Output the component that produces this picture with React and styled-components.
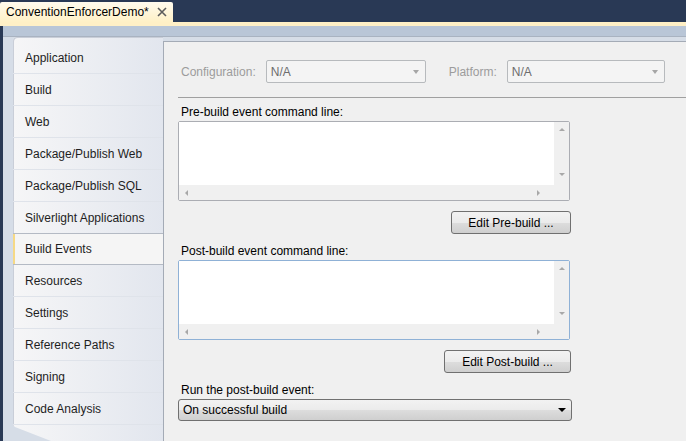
import React from 'react'
import styled, { createGlobalStyle } from 'styled-components'

const GlobalStyle = createGlobalStyle`
  html, body { margin: 0; padding: 0; background: #293955; }
  * { box-sizing: border-box; }
`

const font = `"Liberation Sans", "DejaVu Sans", Arial, sans-serif`

const Frame = styled.div`
  width: 686px;
  height: 441px;
  overflow: hidden;
  display: flex;
  flex-direction: column;
  background: #293955;
  font-family: ${font};
  font-size: 12px;
  color: #1e1e1e;
`

const TabStrip = styled.div`
  height: 22px;
  display: flex;
  align-items: flex-end;
`

const DocTab = styled.div`
  width: 173px;
  height: 20px;
  display: flex;
  align-items: center;
  justify-content: space-between;
  padding: 0 6px 0 6px;
  border-radius: 2px 2px 0 0;
  background: linear-gradient(#fffbee, #fff1c6);
  color: #000;
`

const CloseIcon = styled.svg`
  width: 10px;
  height: 10px;
  display: block;
`

const YellowBar = styled.div`
  height: 4px;
  background: #fff0c6;
`

const Body = styled.div`
  flex: 1;
  display: flex;
  border-left: 3px solid #293955;
  background: linear-gradient(#b9c6d7 0, #b9c6d7 10px, #a9b3c1 10px, #a9b3c1 11px, #d6dde7 11px);
  min-height: 0;
`

const Sidebar = styled.div`
  width: 150px;
  margin: 11px 0 0 10px;
  padding-top: 5px;
  border-radius: 4px 0 0 0;
  background: linear-gradient(to right, #f6f6f7, #e2e6ee);
  box-shadow: inset 1px 1px 0 #c9ced8;
  clip-path: polygon(0 0, 100% 0, 100% 100%, 38px 100%, 2px calc(100% - 14px), 0 calc(100% - 16px));
  display: flex;
  flex-direction: column;
`

const NavItem = styled.div`
  height: 32px;
  display: flex;
  align-items: center;
  padding-left: 12px;
  border-bottom: 1px solid ${p => (p.$active ? '#b4bac4' : '#dfe3ea')};
  ${p => p.$active && `
    background: #f5f5f5;
    margin-right: -2px;
    position: relative;
    z-index: 1;
    border-top: 1px solid #b4bac4;
    margin-top: -1px;
    box-shadow: inset 2px 0 0 #f6d985;
  `}
`

const Content = styled.div`
  flex: 1;
  margin-top: 15px;
  background: #f0f0f0;
  border-left: 1px solid #a4abb6;
  border-top: 1px solid #a4abb6;
  padding-top: 18px;
`

const ConfigRow = styled.div`
  display: flex;
  align-items: center;
  padding-left: 17px;
  height: 23px;
`

const DimLabel = styled.span`
  color: #9c9c9c;
  margin-right: ${p => p.$gap}px;
`

const DisabledSelect = styled.div`
  width: ${p => p.$w}px;
  height: 23px;
  border: 1px solid #b7babd;
  border-radius: 2px;
  background: #f4f4f4;
  display: flex;
  align-items: center;
  justify-content: space-between;
  padding: 0 6px 0 4px;
  color: #6d6d6d;
  margin-right: ${p => p.$mr || 0}px;
`

const DimArrow = styled.span`
  width: 0;
  height: 0;
  border-left: 3.5px solid transparent;
  border-right: 3.5px solid transparent;
  border-top: 4px solid #a6a6a6;
`

const Divider = styled.div`
  height: 1px;
  background: #a0a0a0;
  margin: 14px 0 0 14px;
`

const Section = styled.div`
  width: 393px;
  margin-left: 14px;
  display: flex;
  flex-direction: column;
`

const FieldLabel = styled.div`
  padding-left: 3px;
  height: 17px;
  line-height: 16px;
  margin-top: ${p => p.$mt}px;
  color: #000;
`

const ScrollBox = styled.div`
  width: 392px;
  height: 80px;
  border: 1px solid ${p => (p.$focus ? '#8fb1d6' : '#abadb3')};
  border-radius: 2px;
  display: grid;
  grid-template-columns: 1fr 15px;
  grid-template-rows: 1fr 15px;
  background: #fff;
`

const TextArea = styled.div`
  background: #fff;
`

const VBar = styled.div`
  background: #f0f0f0;
  display: flex;
  flex-direction: column;
  justify-content: space-between;
  align-items: center;
  padding: 6px 0 9px;
`

const HBar = styled.div`
  background: #f0f0f0;
  display: flex;
  justify-content: space-between;
  align-items: center;
  padding: 0 14px 0 6px;
`

const Corner = styled.div`
  background: #f0f0f0;
`

const Tri = styled.span`
  width: 0;
  height: 0;
  ${p => p.$dir === 'up' && `border-left: 3.5px solid transparent; border-right: 3.5px solid transparent; border-bottom: 3px solid #a8a8a8;`}
  ${p => p.$dir === 'down' && `border-left: 3.5px solid transparent; border-right: 3.5px solid transparent; border-top: 3px solid #a8a8a8;`}
  ${p => p.$dir === 'left' && `border-top: 3.5px solid transparent; border-bottom: 3.5px solid transparent; border-right: 3px solid #a8a8a8;`}
  ${p => p.$dir === 'right' && `border-top: 3.5px solid transparent; border-bottom: 3.5px solid transparent; border-left: 3px solid #a8a8a8;`}
`

const ButtonRow = styled.div`
  display: flex;
  justify-content: flex-end;
  margin-top: ${p => p.$mt}px;
`

const Button = styled.div`
  width: ${p => p.$w}px;
  height: 23px;
  border: 1px solid #707070;
  border-radius: 3px;
  background: linear-gradient(#f2f2f2 0%, #ebebeb 50%, #dddddd 51%, #cfcfcf 100%);
  display: flex;
  align-items: center;
  justify-content: center;
  color: #000;
`

const DropDown = styled.div`
  width: 394px;
  height: 22px;
  border: 1px solid #707070;
  border-radius: 3px;
  background: linear-gradient(#f2f2f2 0%, #ebebeb 50%, #dddddd 51%, #cfcfcf 100%);
  display: flex;
  align-items: center;
  justify-content: space-between;
  padding: 0 4px 0 4px;
  color: #000;
`

const BlackArrow = styled.span`
  width: 0;
  height: 0;
  border-left: 4px solid transparent;
  border-right: 4px solid transparent;
  border-top: 4px solid #000;
  margin-right: 1px;
`

const navItems = [
  'Application',
  'Build',
  'Web',
  'Package/Publish Web',
  'Package/Publish SQL',
  'Silverlight Applications',
  'Build Events',
  'Resources',
  'Settings',
  'Reference Paths',
  'Signing',
  'Code Analysis',
]

const EventBox = ({ focus }) => (
  <ScrollBox $focus={focus}>
    <TextArea />
    <VBar>
      <Tri $dir="up" />
      <Tri $dir="down" />
    </VBar>
    <HBar>
      <Tri $dir="left" />
      <Tri $dir="right" />
    </HBar>
    <Corner />
  </ScrollBox>
)

const App = () => {
  return (
    <>
      <GlobalStyle />
      <Frame>
        <TabStrip>
          <DocTab>
            <span>ConventionEnforcerDemo*</span>
            <CloseIcon viewBox="0 0 10 10">
              <path d="M1 1 L9 9 M9 1 L1 9" stroke="#5c5c5c" strokeWidth="1.6" fill="none" />
            </CloseIcon>
          </DocTab>
        </TabStrip>
        <YellowBar />
        <Body>
          <Sidebar>
            {navItems.map(item => (
              <NavItem key={item} $active={item === 'Build Events'}>{item}</NavItem>
            ))}
          </Sidebar>
          <Content>
            <ConfigRow>
              <DimLabel $gap={10}>Configuration:</DimLabel>
              <DisabledSelect $w={160} $mr={23}>
                <span>N/A</span>
                <DimArrow />
              </DisabledSelect>
              <DimLabel $gap={10}>Platform:</DimLabel>
              <DisabledSelect $w={158}>
                <span>N/A</span>
                <DimArrow />
              </DisabledSelect>
            </ConfigRow>
            <Divider />
            <Section>
              <FieldLabel $mt={6}>Pre-build event command line:</FieldLabel>
              <EventBox />
              <ButtonRow $mt={10}>
                <Button $w={120}>Edit Pre-build ...</Button>
              </ButtonRow>
              <FieldLabel $mt={9}>Post-build event command line:</FieldLabel>
              <EventBox focus />
              <ButtonRow $mt={10}>
                <Button $w={127}>Edit Post-build ...</Button>
              </ButtonRow>
              <FieldLabel $mt={9}>Run the post-build event:</FieldLabel>
              <DropDown>
                <span>On successful build</span>
                <BlackArrow />
              </DropDown>
            </Section>
          </Content>
        </Body>
      </Frame>
    </>
  )
}

export default App
